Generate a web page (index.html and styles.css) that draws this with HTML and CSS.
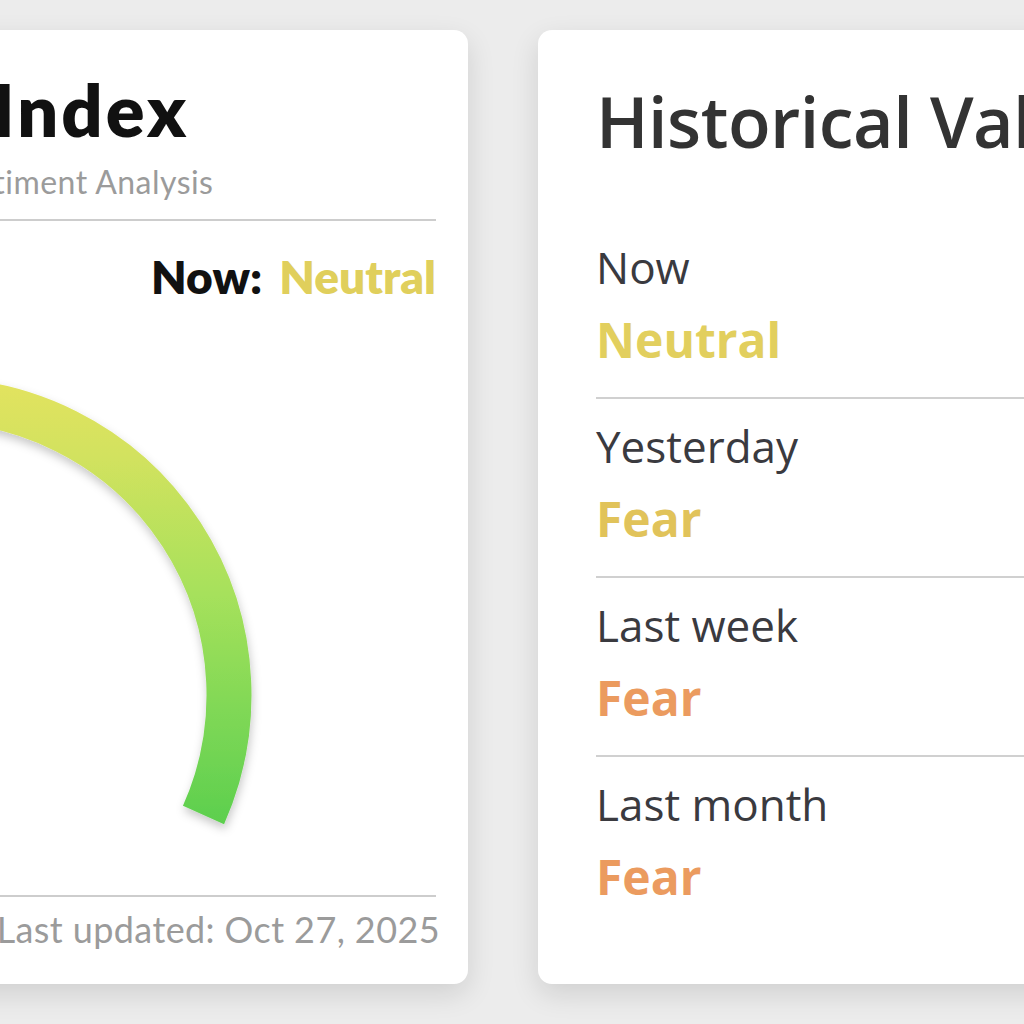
FILE: index.html
```html
<!DOCTYPE html>
<html lang="en">
<head>
<meta charset="utf-8">
<title>Fear &amp; Greed Index</title>
<link rel="stylesheet" href="styles.css">
</head>
<body>
<div class="board">
  <section class="card gauge-card">
    <header class="gauge-head">
      <h1 class="gauge-title">Fear &amp; Greed&ensp;Index</h1>
      <p class="gauge-sub">Global Cryptocurrency Market Sentiment Analysis</p>
    </header>
    <div class="now-line"><span class="now-label">Now:</span><span class="now-value">Neutral</span></div>
    <div class="gauge-wrap">
      <svg class="gauge" width="800" height="588" viewBox="0 0 800 588" aria-hidden="true">
        <defs>
          <linearGradient id="arcGrad" gradientUnits="userSpaceOnUse" x1="0" y1="60" x2="0" y2="520">
            <stop offset="0" stop-color="#e6e35e"/>
            <stop offset="0.2" stop-color="#d2e25e"/>
            <stop offset="0.5" stop-color="#a6e15b"/>
            <stop offset="0.75" stop-color="#80d856"/>
            <stop offset="1" stop-color="#5ccf4e"/>
          </linearGradient>
          <filter id="arcShadow" x="-20%" y="-20%" width="140%" height="140%">
            <feDropShadow dx="1" dy="5" stdDeviation="5" flood-color="#000" flood-opacity="0.22"/>
          </filter>
        </defs>
        <path d="M 28.5 510 A 295 295 0 1 1 567.5 510" fill="none" stroke="url(#arcGrad)" stroke-width="45" filter="url(#arcShadow)"/>
      </svg>
    </div>
    <footer class="updated">Last updated: Oct 27, 2025</footer>
  </section>
  <section class="card history-card">
    <h2 class="history-title">Historical Values</h2>
    <ul class="history-list">
      <li class="history-row"><span class="row-label">Now</span><span class="row-value neutral">Neutral</span></li>
      <li class="history-row"><span class="row-label">Yesterday</span><span class="row-value fear-light">Fear</span></li>
      <li class="history-row"><span class="row-label">Last week</span><span class="row-value fear">Fear</span></li>
      <li class="history-row"><span class="row-label">Last month</span><span class="row-value fear">Fear</span></li>
    </ul>
  </section>
</div>
</body>
</html>
```
FILE: styles.css
```css
html, body {
  margin: 0;
  padding: 0;
}
body {
  background: #ececec;
  width: 1024px;
  height: 1024px;
  overflow: hidden;
}
.board {
  display: flex;
  align-items: stretch;
  gap: 70px;
  padding-top: 30px;
  margin-left: -539px;
}
.card {
  flex: none;
  box-sizing: border-box;
  background: #fff;
  border-radius: 14px;
  box-shadow: 0 10px 28px rgba(0, 0, 0, 0.12);
}

/* left card */
.gauge-card {
  width: 1007px;
  padding: 36px 32px 33px;
  display: flex;
  flex-direction: column;
  font-family: Lato, "Liberation Sans", sans-serif;
}
.gauge-head {
  padding-bottom: 18px;
  border-bottom: 2px solid #cdcdcd;
}
.gauge-title {
  margin: 0;
  font-size: 72px;
  line-height: 86px;
  font-weight: 800;
  letter-spacing: 3.1px;
  color: #111;
  white-space: nowrap;
}
.gauge-sub {
  margin: 11px 0 0;
  font-size: 32px;
  line-height: 1.2;
  letter-spacing: 0.47px;
  color: #9b9b9b;
  white-space: nowrap;
}
.now-line {
  margin-top: 28px;
  display: flex;
  justify-content: flex-end;
  gap: 17px;
  font-size: 46px;
  line-height: 1.2;
  font-weight: 800;
}
.now-label {
  color: #111;
}
.now-value {
  color: #e0cf5c;
}
.gauge-wrap {
  flex: 1;
  min-height: 0;
  display: flex;
  justify-content: flex-end;
  align-items: flex-start;
  border-bottom: 2px solid #cdcdcd;
}
.gauge {
  display: block;
  flex: none;
  overflow: visible;
}
.updated {
  margin: 11px -4px 0 0;
  text-align: right;
  font-size: 36px;
  line-height: 1.2;
  letter-spacing: 0.4px;
  color: #9b9b9b;
  white-space: nowrap;
}

/* right card */
.history-card {
  width: 640px;
  padding: 49px 58px 50px;
  font-family: "Open Sans", "Noto Sans", sans-serif;
}
.history-title {
  margin: 0 0 57px;
  font-size: 70px;
  line-height: 84px;
  font-weight: 600;
  letter-spacing: -0.5px;
  color: #333;
  white-space: nowrap;
}
.history-list {
  list-style: none;
  margin: 0;
  padding: 0;
}
.history-row {
  display: flex;
  flex-direction: column;
  padding: 21px 0 28px;
  border-bottom: 2px solid #d0d0d0;
}
.history-row:last-child {
  border-bottom: 0;
}
.row-label {
  margin-bottom: 18px;
  font-size: 44px;
  line-height: 52px;
  color: #3a3a3f;
}
.row-value {
  font-size: 48px;
  line-height: 58px;
  font-weight: 700;
}
.neutral {
  color: #e2cf5e;
}
.fear-light {
  color: #e1c35a;
}
.fear {
  color: #eb9b5f;
}
```
